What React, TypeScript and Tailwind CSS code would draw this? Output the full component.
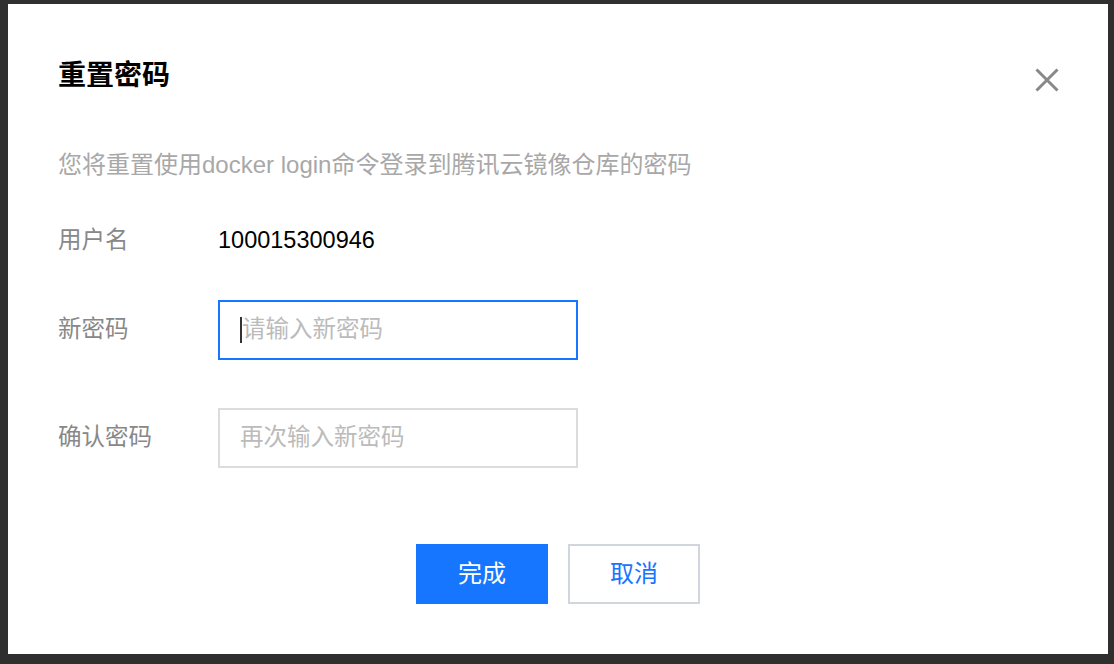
import React from "react";

const FONT = { fontFamily: '"Liberation Sans", "Noto Sans CJK SC", sans-serif' };

export default function App() {
  return (
    <div
      className="w-[1114px] h-[664px] bg-[#2f2f30] pt-[4px] pl-[8px] overflow-hidden"
      style={FONT}
    >
      <div className="relative w-[1100px] h-[650px] bg-white px-[50px] flex flex-col">
        {/* header */}
        <div className="mt-[52px] h-[40px] flex items-center justify-between">
          <h2 className="text-[28px] leading-[40px] font-bold text-black">重置密码</h2>
          <svg width="24" height="24" viewBox="0 0 24 24" className="mt-[7px] -mr-[1px]">
            <path d="M1.5 1.5 L22.5 22.5 M22.5 1.5 L1.5 22.5" stroke="#888888" strokeWidth="3" strokeLinecap="butt" />
          </svg>
        </div>

        {/* description */}
        <p className="mt-[53px] text-[24px] leading-[32px] text-[#a8a8a8]">
          您将重置使用docker login命令登录到腾讯云镜像仓库的密码
        </p>

        {/* username */}
        <div className="mt-[30px] h-[60px] flex items-center">
          <span className="w-[160px] text-[23.5px] text-[#888888]">用户名</span>
          <span className="text-[23.5px] text-black">100015300946</span>
        </div>

        {/* new password */}
        <div className="mt-[29px] h-[60px] flex items-center">
          <span className="w-[160px] text-[23.5px] text-[#888888]">新密码</span>
          <div className="w-[360px] h-[60px] border-2 border-[#1776ff] flex items-center pl-[20px]">
            <span className="w-[2px] h-[26px] bg-[#333333]" />
            <span className="text-[23.5px] text-[#bbbbbb]">请输入新密码</span>
          </div>
        </div>

        {/* confirm password */}
        <div className="mt-[48px] h-[60px] flex items-center">
          <span className="w-[160px] text-[23.5px] text-[#888888]">确认密码</span>
          <div className="w-[360px] h-[60px] border-2 border-[#dcdcdc] flex items-center pl-[20px]">
            <span className="text-[23.5px] text-[#bbbbbb]">再次输入新密码</span>
          </div>
        </div>

        {/* buttons */}
        <div className="mt-[76px] flex justify-center gap-[20px]">
          <button className="w-[132px] h-[60px] bg-[#1776ff] text-white text-[24px]">完成</button>
          <button className="w-[132px] h-[60px] border-2 border-[#d1d6de] bg-white text-[#1776ff] text-[24px]">
            取消
          </button>
        </div>
      </div>
    </div>
  );
}
